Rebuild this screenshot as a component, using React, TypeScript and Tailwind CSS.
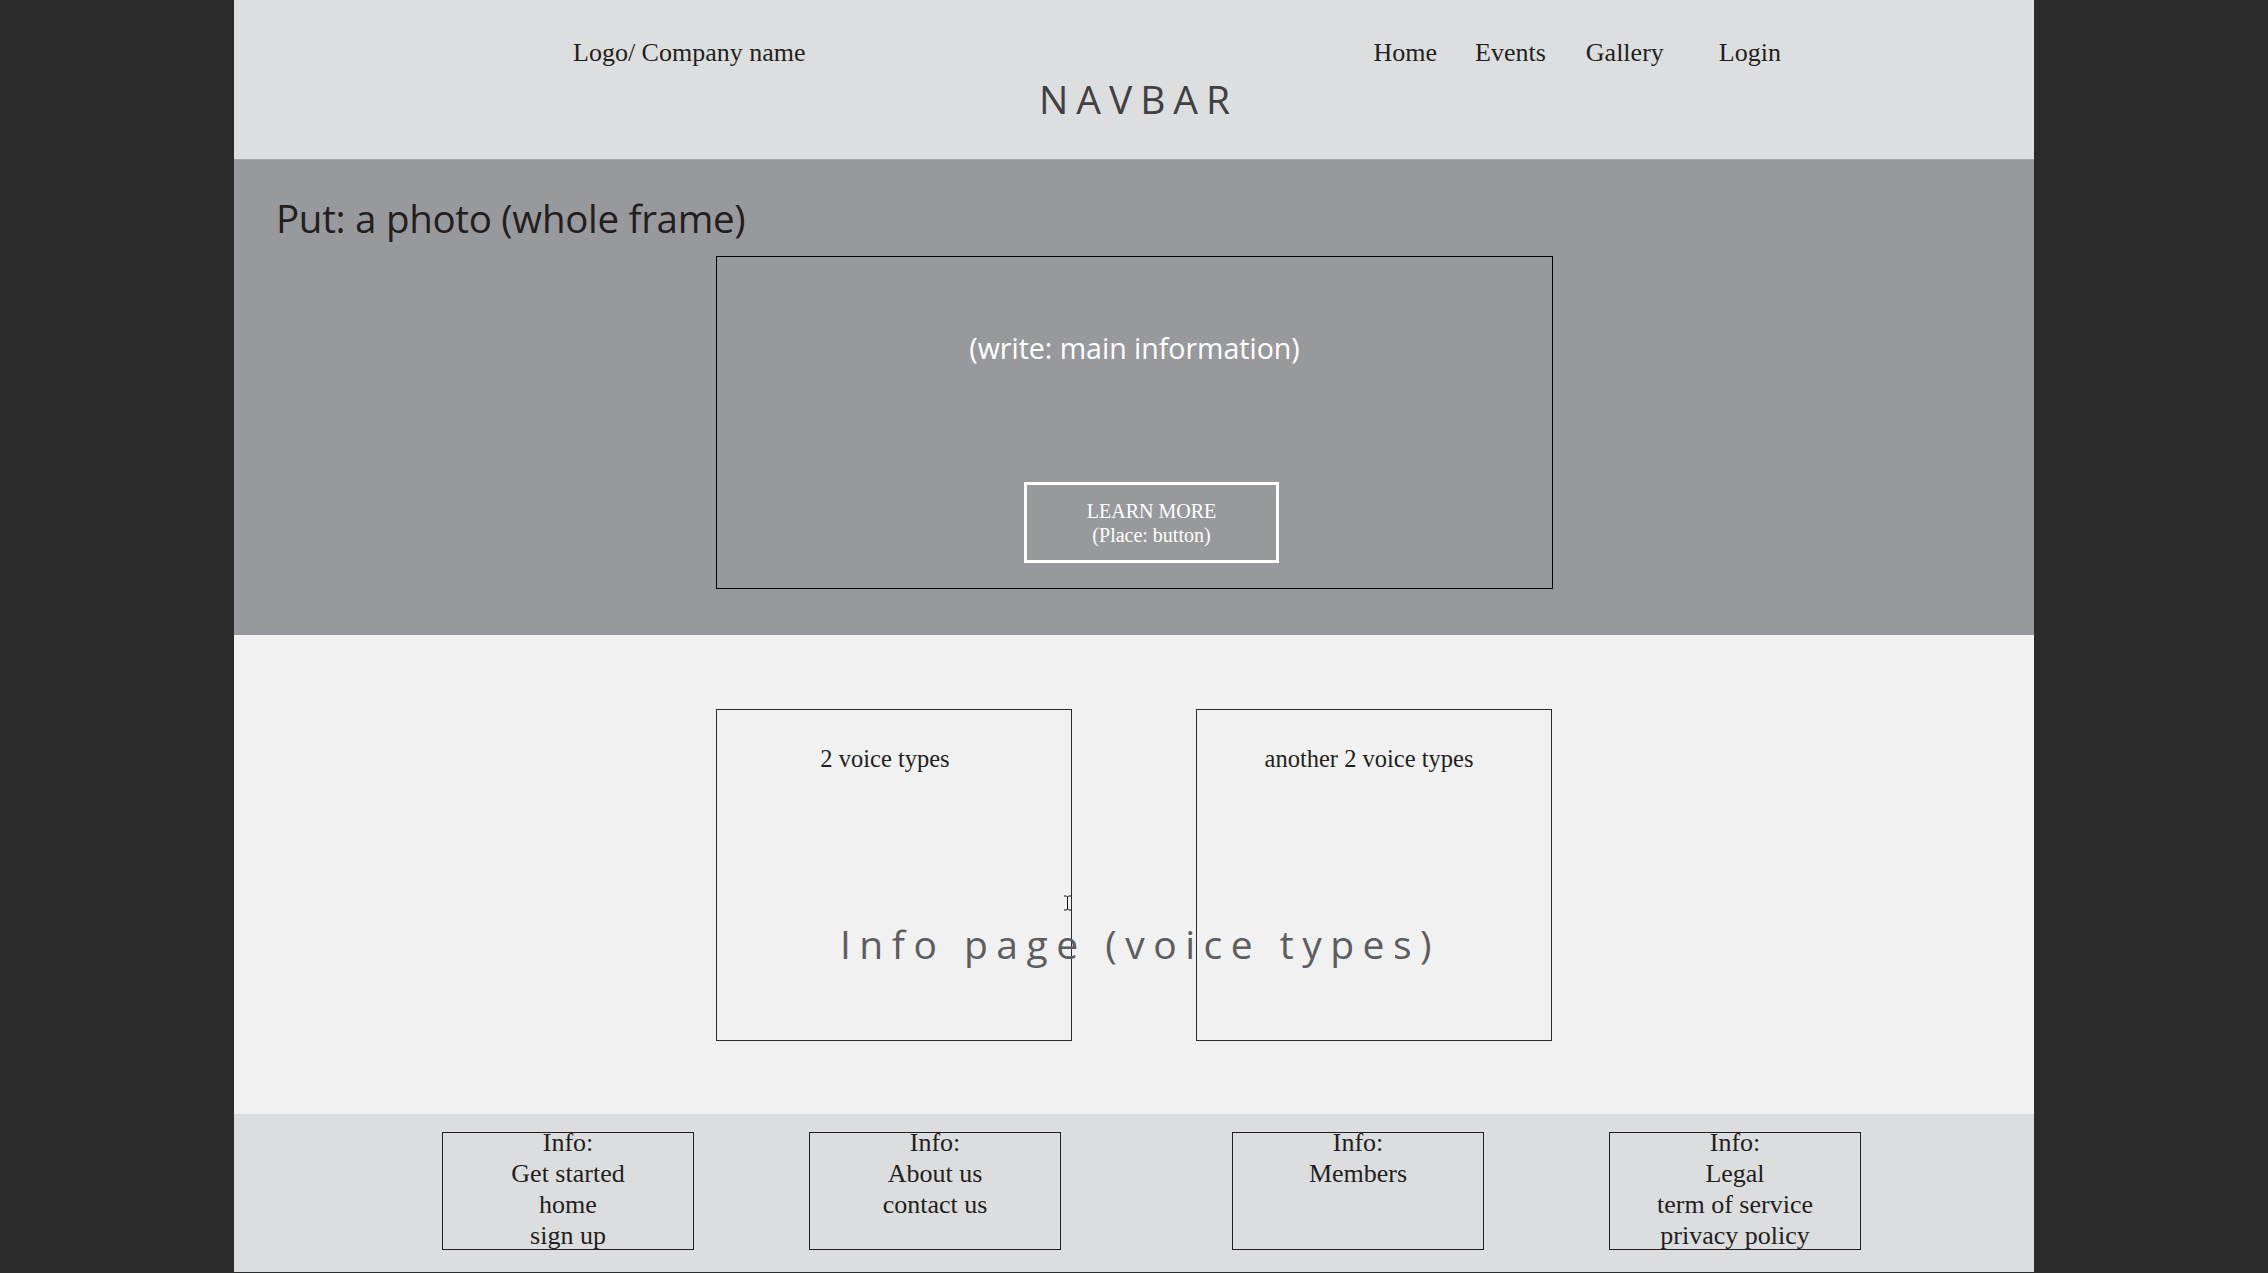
import React from "react"

const serif = "font-['Liberation_Serif','Times_New_Roman',serif]"
const sans = "font-['Open_Sans','Noto_Sans',sans-serif]"

const footerBoxes = [
  { lines: ["Info:", "Get started", "home", "sign up"], ml: "ml-[208px]" },
  { lines: ["Info:", "About us", "contact us"], ml: "ml-[115px]" },
  { lines: ["Info:", "Members"], ml: "ml-[171px]" },
  { lines: ["Info:", "Legal", "term of service", "privacy policy"], ml: "ml-[125px]" },
]

function Navbar() {
  return (
    <header className="flex h-[159px] flex-col bg-[#dddee0] pt-[37px]">
      <div className={`flex items-start text-[26px] leading-[31px] text-[#231f20] ${serif}`}>
        <span className="ml-[339px]">Logo/ Company name</span>
        <span className="ml-[568px]">Home</span>
        <span className="ml-[38px]">Events</span>
        <span className="ml-[40px]">Gallery</span>
        <span className="ml-[55px]">Login</span>
      </div>
      <div className={`mt-[11px] pl-[9px] text-center text-[39px] leading-[39px] tracking-[8px] text-[#414042] ${sans}`}>
        NAVBAR
      </div>
    </header>
  )
}

function Hero() {
  return (
    <section className="flex h-[476px] flex-col border-t border-[#a4a5a8] bg-[#98999c] pt-[35px]">
      <h1 className={`ml-[42px] text-[38.5px] leading-[47px] tracking-[-0.3px] text-[#231f20] ${sans}`}>
        Put: a photo (whole frame)
      </h1>
      <div className="ml-[482px] mt-[14px] flex h-[333px] w-[837px] flex-col border border-black pt-[74px]">
        <p className={`text-center text-[28.5px] leading-[35px] text-white ${sans}`}>
          (write: main information)
        </p>
        <button
          className={`ml-[307px] mt-[116px] flex h-[81px] w-[255px] flex-col items-center justify-center border-[3px] border-white text-[20px] leading-[24px] text-white ${serif}`}
        >
          <span>LEARN MORE</span>
          <span>(Place: button)</span>
        </button>
      </div>
    </section>
  )
}

function VoiceCard({ title, pr }: { title: string; pr: string }) {
  return (
    <div className={`h-[332px] w-[356px] border border-[#2b2b2b] pt-[34px] ${pr}`}>
      <p className={`text-center text-[24.5px] leading-[29px] text-[#231f20] ${serif}`}>{title}</p>
    </div>
  )
}

function InfoSection() {
  return (
    <section className="relative h-[479px] bg-[#f1f1f1] pt-[74px]">
      <div className="ml-[482px] flex gap-[124px]">
        <VoiceCard title="2 voice types" pr="pr-[18px]" />
        <VoiceCard title="another 2 voice types" pr="pr-[10px]" />
      </div>
      <div
        className={`absolute left-0 right-0 top-[289px] pl-[12px] text-center text-[39px] leading-[39px] tracking-[8.5px] text-[#5d5d60] ${sans}`}
      >
        Info page (voice types)
      </div>
      {/* text cursor */}
      <svg className="absolute left-[829px] top-[260px]" width="9" height="16" viewBox="0 0 9 16">
        <path d="M1 1 H3.5 L4.5 2 L5.5 1 H8 M4.5 2 V14 M1 15 H3.5 L4.5 14 L5.5 15 H8" fill="none" stroke="#111" strokeWidth="1" />
      </svg>
    </section>
  )
}

function Footer() {
  return (
    <footer className="flex h-[159px] items-start border-b border-[#2b2b2b] bg-[#dcdddf] pt-[18px]">
      {footerBoxes.map((b, i) => (
        <div key={i} className={`h-[118px] w-[252px] border border-[#231f20] ${b.ml}`}>
          <div className={`-mt-[6px] text-center text-[26px] leading-[31px] text-[#231f20] ${serif}`}>
            {b.lines.map((l) => (
              <div key={l}>{l}</div>
            ))}
          </div>
        </div>
      ))}
    </footer>
  )
}

export default function App() {
  return (
    <div className="flex min-h-[1273px] justify-center bg-[#2b2b2b]">
      <div className="flex w-[1800px] flex-col">
        <Navbar />
        <Hero />
        <InfoSection />
        <Footer />
      </div>
    </div>
  )
}
